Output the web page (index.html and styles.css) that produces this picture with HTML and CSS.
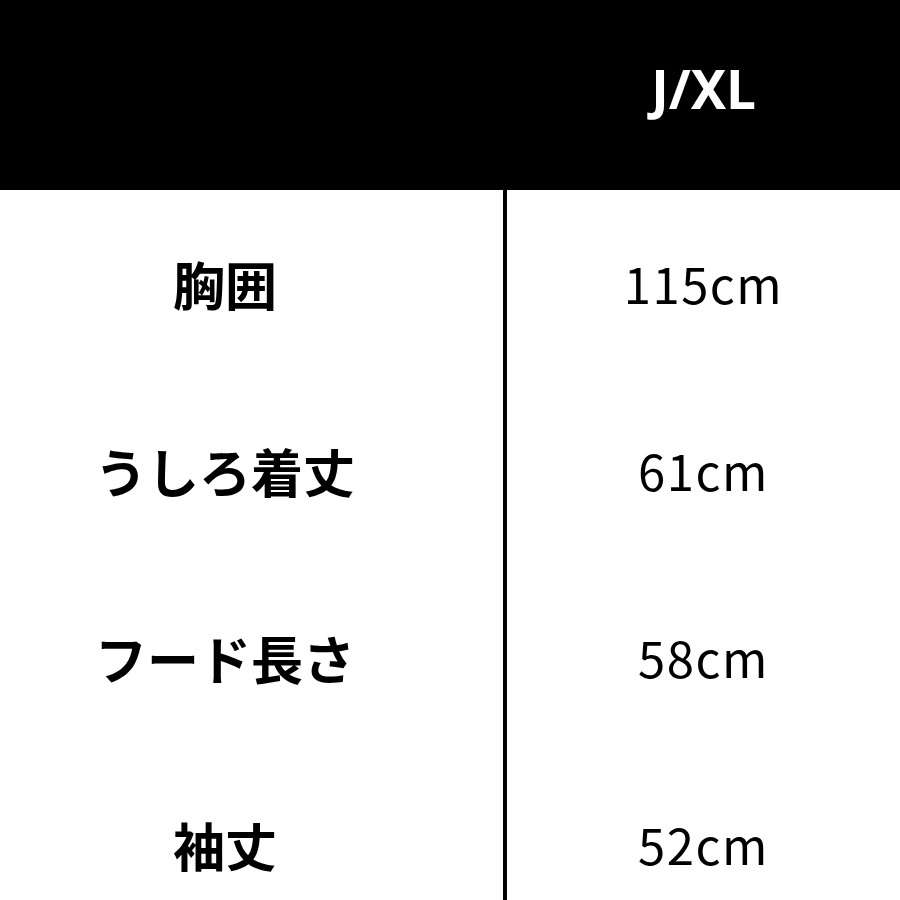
FILE: index.html
```html
<!DOCTYPE html>
<html lang="ja">
<head>
<meta charset="utf-8">
<link rel="stylesheet" href="styles.css">
</head>
<body>
<div class="table">
  <div class="head">
    <div class="head-left"></div>
    <div class="head-right">J/XL</div>
  </div>
  <div class="body">
    <div class="row"><div class="label">胸囲</div><div class="value">115cm</div></div>
    <div class="row"><div class="label">うしろ着丈</div><div class="value">61cm</div></div>
    <div class="row"><div class="label">フード長さ</div><div class="value">58cm</div></div>
    <div class="row"><div class="label">袖丈</div><div class="value">52cm</div></div>
  </div>
</div>
</body>
</html>
```

FILE: styles.css
```css
html, body {
  margin: 0;
  padding: 0;
  background: #fff;
}
.table {
  width: 900px;
  height: 900px;
  overflow: hidden;
}
.head {
  height: 190px;
  background: #000;
  display: flex;
}
.head-left {
  width: 507px;
}
.head-right {
  flex: 1;
  display: flex;
  align-items: center;
  justify-content: center;
  color: #fff;
  font-family: "Noto Sans", "DejaVu Sans", sans-serif;
  font-weight: 700;
  font-size: 53px;
  padding-bottom: 14px;
  box-sizing: border-box;
}
.row {
  height: 187px;
  display: flex;
}
.label {
  width: 450px;
  padding-right: 53px;
  border-right: 4px solid #000;
  display: flex;
  align-items: center;
  justify-content: center;
  font-family: "Noto Sans CJK JP", sans-serif;
  font-weight: 700;
  font-size: 52px;
  color: #000;
}
.value {
  flex: 1;
  display: flex;
  align-items: center;
  justify-content: center;
  font-family: "Noto Sans CJK JP", sans-serif;
  font-weight: 400;
  font-size: 49px;
  letter-spacing: 1.5px;
  color: #000;
  padding-bottom: 2px;
}
```
